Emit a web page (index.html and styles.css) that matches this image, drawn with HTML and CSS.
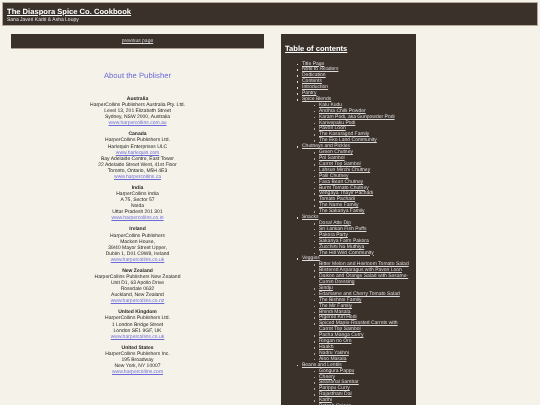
FILE: index.html
```html
<!DOCTYPE html>
<html lang="en">
<head>
  <meta charset="UTF-8">
  <title>About the Publisher</title>
  <link rel="stylesheet" href="styles.css">
</head>
<body>

  <!-- Book title bar -->
  <header class="masthead">
    <h1><a href="#">The Diaspora Spice Co. Cookbook</a></h1>
    <p>Sana Javeri Kadri &amp; Asha Loupy</p>
  </header>

  <div class="layout">
    <main class="content">
      <nav class="pager"><a href="#">previous page</a></nav>

      <h2>About the Publisher</h2>

      <p><strong>Australia</strong><br>
        HarperCollins Publishers Australia Pty. Ltd.<br>
        Level 13, 201 Elizabeth Street<br>
        Sydney, NSW 2000, Australia<br>
        <a href="#">www.harpercollins.com.au</a></p>

      <p><strong>Canada</strong><br>
        HarperCollins Publishers Ltd.<br>
        Harlequin Enterprises ULC<br>
        <a href="#">www.harlequin.com</a><br>
        Bay Adelaide Centre, East Tower<br>
        22 Adelaide Street West, 41st Floor<br>
        Toronto, Ontario, M5H 4E3<br>
        <a href="#">www.harpercollins.ca</a></p>

      <p><strong>India</strong><br>
        HarperCollins India<br>
        A 75, Sector 57<br>
        Noida<br>
        Uttar Pradesh 201 301<br>
        <a href="#">www.harpercollins.co.in</a></p>

      <p><strong>Ireland</strong><br>
        HarperCollins Publishers<br>
        Macken House,<br>
        39/40 Mayor Street Upper,<br>
        Dublin 1, D01 C9W8, Ireland<br>
        <a href="#">www.harpercollins.co.uk</a></p>

      <p><strong>New Zealand</strong><br>
        HarperCollins Publishers New Zealand<br>
        Unit D1, 63 Apollo Drive<br>
        Rosedale 0632<br>
        Auckland, New Zealand<br>
        <a href="#">www.harpercollins.co.nz</a></p>

      <p><strong>United Kingdom</strong><br>
        HarperCollins Publishers Ltd.<br>
        1 London Bridge Street<br>
        London SE1 9GF, UK<br>
        <a href="#">www.harpercollins.co.uk</a></p>

      <p><strong>United States</strong><br>
        HarperCollins Publishers Inc.<br>
        195 Broadway<br>
        New York, NY 10007<br>
        <a href="#">www.harpercollins.com</a></p>
    </main>

    <!-- Table of contents -->
    <aside class="toc">
      <h2><a href="#">Table of contents</a></h2>
      <ul>
        <li><a href="#">Title Page</a></li>
        <li><a href="#">Note to Readers</a></li>
        <li><a href="#">Dedication</a></li>
        <li><a href="#">Contents</a></li>
        <li><a href="#">Introduction</a></li>
        <li><a href="#">Pantry</a></li>
        <li><a href="#">Spice Blends</a>
          <ul>
            <li><a href="#">Kalu Kudu</a></li>
            <li><a href="#">Andhra Chilli Powder</a></li>
            <li><a href="#">Karam Podi, aka Gunpowder Podi</a></li>
            <li><a href="#">Karivepaku Podi</a></li>
            <li><a href="#">Pavon Loon</a></li>
            <li><a href="#">The Kasaragod Family</a></li>
            <li><a href="#">The Eko Land Community</a></li>
          </ul>
        </li>
        <li><a href="#">Chutneys and Pickles</a>
          <ul>
            <li><a href="#">Green Chutney</a></li>
            <li><a href="#">Pol Sambol</a></li>
            <li><a href="#">Carrot Top Sambol</a></li>
            <li><a href="#">Lahsun Mirchi Chutney</a></li>
            <li><a href="#">Palli Chutney</a></li>
            <li><a href="#">Fava Bean Chutney</a></li>
            <li><a href="#">Burnt Tomato Chutney</a></li>
            <li><a href="#">Vengaya Thayir Pachadi</a></li>
            <li><a href="#">Tomato Pachadi</a></li>
            <li><a href="#">The Name Family</a></li>
            <li><a href="#">The Sakariya Family</a></li>
          </ul>
        </li>
        <li><a href="#">Snacks</a>
          <ul>
            <li><a href="#">Dosa! Atte Dip</a></li>
            <li><a href="#">Sri Lankan Fish Puffs</a></li>
            <li><a href="#">Pakora Party</a></li>
            <li><a href="#">Sakariya Farm Pakora</a></li>
            <li><a href="#">Zucchini Na Muthiya</a></li>
            <li><a href="#">The Hill Wild Community</a></li>
          </ul>
        </li>
        <li><a href="#">Veggies</a>
          <ul>
            <li><a href="#">Bitter Melon and Heirloom Tomato Salad</a></li>
            <li><a href="#">Blistered Asparagus with Pavon Loon</a></li>
            <li><a href="#">Daikon and Orange Salad with Sesame-Cumin Dressing</a></li>
            <li><a href="#">Sindju</a></li>
            <li><a href="#">Edamame and Cherry Tomato Salad</a></li>
            <li><a href="#">The Bishnoi Family</a></li>
            <li><a href="#">The Mir Family</a></li>
            <li><a href="#">Bhindi Masala</a></li>
            <li><a href="#">Pigeree Kiri Hodi</a></li>
            <li><a href="#">Spiced Maple-Roasted Carrots with Carrot Top Sambol</a></li>
            <li><a href="#">Pacha Manga Curry</a></li>
            <li><a href="#">Ringan no Oro</a></li>
            <li><a href="#">Haakh</a></li>
            <li><a href="#">Nadru Yakhni</a></li>
            <li><a href="#">Aloo Masala</a></li>
          </ul>
        </li>
        <li><a href="#">Beans and Lentils</a>
          <ul>
            <li><a href="#">Gongura Pappu</a></li>
            <li><a href="#">Cheery</a></li>
            <li><a href="#">Seasonal Sambar</a></li>
            <li><a href="#">Parippu Curry</a></li>
            <li><a href="#">Rajasthani Dal</a></li>
            <li><a href="#">Kadhi</a></li>
            <li><a href="#">Batsoh Spices</a></li>
          </ul>
        </li>
      </ul>
    </aside>
  </div>

</body>
</html>
```

FILE: styles.css
```css
/* Global */
html, body {
  height: 405px;
  overflow: hidden;
}
body {
  font-family: "Liberation Sans", Arial, sans-serif;
  font-size: 5px;
  line-height: 6.1px;
  text-rendering: geometricPrecision;
  background-color: #f5f3e9;
  color: #222;
  margin: 0;
  padding: 2px;
  box-sizing: border-box;
  filter: blur(0.3px);
}
a {
  color: #6a6ad8;
}

/* Title bar */
.masthead {
  background: #3b312b;
  color: #eee;
  border: 1px solid #b5a99a;
  height: 24px;
  padding: 3.5px 4px;
  box-sizing: border-box;
}
.masthead h1 {
  margin: 0;
  font-size: 7.6px;
  line-height: 10px;
}
.masthead h1 a {
  color: #fff;
}
.masthead p {
  margin: 0;
  font-size: 5px;
  line-height: 6px;
}

/* Columns */
.layout {
  display: flex;
  align-items: flex-start;
  padding: 8px 0 0 9px;
}
.content {
  width: 253px;
  text-align: center;
}
.pager {
  background: #3b312b;
  height: 15px;
  line-height: 14px;
  border-bottom: 1px solid #a89c8e;
  box-sizing: border-box;
}
.pager a {
  color: #ddd;
}
.content h2 {
  margin: 20.5px 0 14.5px;
  font-size: 7.7px;
  line-height: 12px;
  font-weight: normal;
  color: #6a6ad8;
}
.content p {
  margin: 0 0 4.9px;
}

/* Table of contents */
.toc {
  margin-left: 17px;
  width: 135px;
  height: 400px;
  padding: 6px 4px 0;
  box-sizing: border-box;
  background: #3b312b;
  color: #ddd;
  line-height: 5.9px;
}
.toc h2 {
  margin: 4px 0 7.5px;
  font-size: 7.6px;
  line-height: 10px;
}
.toc h2 a {
  color: #fff;
}
.toc a {
  color: #ddd;
}
.toc ul {
  margin: 0;
  padding: 0 0 0 17px;
  list-style: none;
}
.toc li {
  position: relative;
}
/* list markers are drawn by hand, the default ones sit too far out at this size */
.toc li::before {
  content: "";
  position: absolute;
  left: -5.5px;
  top: 2px;
  width: 1.6px;
  height: 1.6px;
  background: #ddd;
}
.toc li li::before {
  background: #b0aaa2;
}
```
